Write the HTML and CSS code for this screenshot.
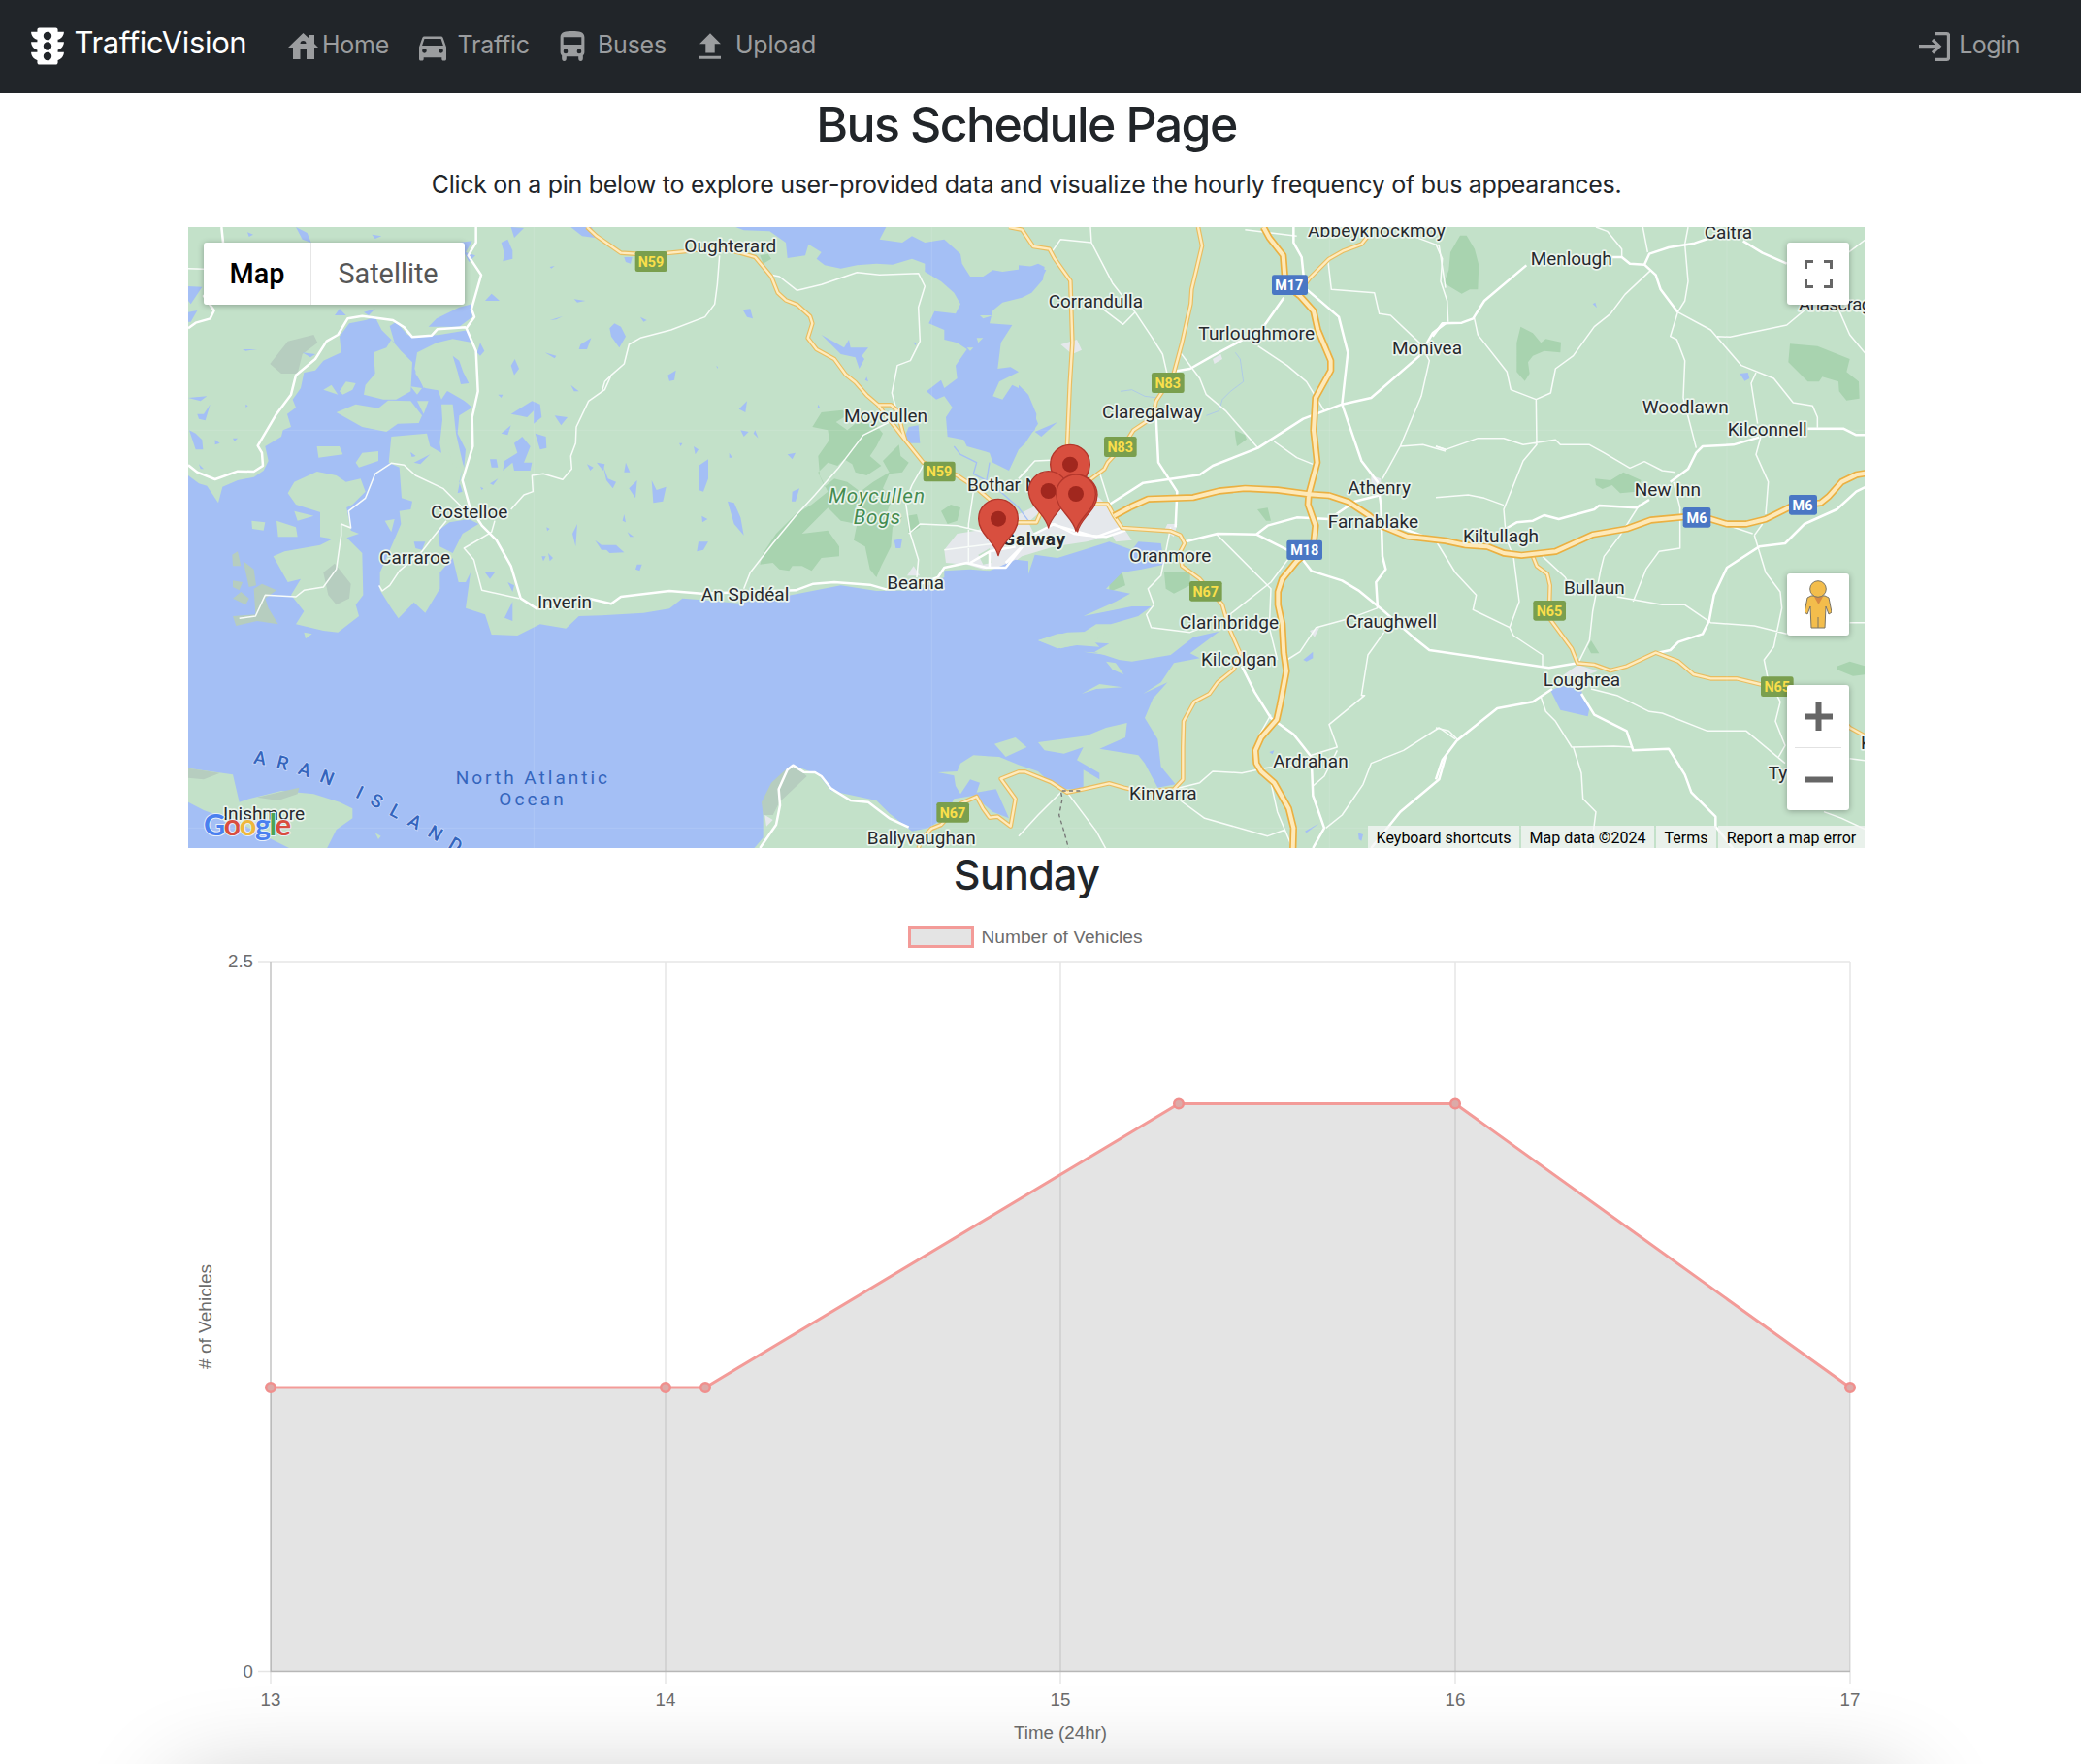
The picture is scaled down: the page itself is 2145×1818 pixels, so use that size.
FILE: index.html
```html
<!DOCTYPE html>
<html lang="en">
<head>
<meta charset="utf-8">
<title>TrafficVision</title>
<link rel="stylesheet" href="styles.css">
</head>
<body>
<nav class="navbar">
  <a class="brand"><svg class="i-brand" viewBox="3 2 18 20"><path fill-rule="evenodd" d="M20 10h-3V8.860c1.720-.45 3-2 3-3.860h-3V4c0-.55-.45-1-1-1H8c-.55 0-1 .45-1 1v1H4c0 1.860 1.280 3.410 3 3.860V10H4c0 1.860 1.280 3.410 3 3.860V15H4c0 1.860 1.280 3.410 3 3.860V20c0 .55.45 1 1 1h8c.55 0 1-.45 1-1v-1.140c1.720-.45 3-2 3-3.860h-3v-1.140c1.720-.45 3-2 3-3.860zM12 19a2 2 0 1 1 0-4 2 2 0 0 1 0 4zm0-5a2 2 0 1 1 0-4 2 2 0 0 1 0 4zm0-5a2 2 0 1 1 0-4 2 2 0 0 1 0 4z"/></svg><span>TrafficVision</span></a>
  <a class="link home"><svg viewBox="0 0 31 27"><path fill-rule="evenodd" d="M15.500 0 22 6V2h5v9l4 4h-4v12h-8V17h-6.500v10H5V15H0zM12.500 11h6q0-3-3-3t-3 3z"/></svg><span>Home</span></a>
  <a class="link traffic"><svg viewBox="3 5 18 16"><path d="M18.920 6.010C18.720 5.420 18.160 5 17.500 5h-11c-.66 0-1.210.42-1.420 1.010L3 12v8c0 .55.45 1 1 1h1c.55 0 1-.45 1-1v-1h12v1c0 .55.450 1 1 1h1c.55 0 1-.45 1-1v-8zM6.500 16a1.500 1.500 0 1 1 0-3 1.500 1.500 0 0 1 0 3zm11 0a1.500 1.500 0 1 1 0-3 1.500 1.500 0 0 1 0 3zM5 11l1.500-4.500h11L19 11z"/></svg><span>Traffic</span></a>
  <a class="link buses"><svg viewBox="4 2 16 20"><path d="M4 16c0 .88.39 1.670 1 2.220V20c0 1.100.5 2 1.500 2S8 21 8 20v-1h8v1c0 1 .5 2 1.500 2s1.500-1 1.500-2v-1.780c.61-.55 1-1.340 1-2.220V6c0-3.500-3.580-4-8-4s-8 .5-8 4zm3.500 1a1.500 1.500 0 1 1 0-3 1.500 1.500 0 0 1 0 3zm9 0a1.500 1.500 0 1 1 0-3 1.500 1.500 0 0 1 0 3zM18 11H6V6h12z"/></svg><span>Buses</span></a>
  <a class="link upload"><svg viewBox="5 3 14 17"><path d="M9 16h6v-6h4l-7-7-7 7h4zm-4 2h14v2H5z"/></svg><span>Upload</span></a>
  <a class="link login"><svg viewBox="0 0 32 30"><path d="M0 14.700h20M14 8l7 6.700-7 6.800M16 1.700h12.500q2 0 2 2v22.600q0 2-2 2H16" fill="none" stroke="currentColor" stroke-width="3.300"/></svg><span>Login</span></a>
</nav>
<main>
  <h1><span>Bus Schedule Page</span></h1>
  <p class="lead"><span>Click on a pin below to explore user-provided data and visualize the hourly frequency of bus appearances.</span></p>
  <section class="map">
  <svg class="map-art" viewBox="12 12 5184 1920">
    <defs>
      <path id="pin" d="M0 114C-8 72-61 48-61 0A61 61 0 1 1 61 0C61 48 8 72 0 114Z"/>
      <path id="aran" d="M212 1670C340 1688 480 1746 600 1811S790 1915 960 2018"/>
      <g id="national">
        <path transform="translate(1290)" d="M-45 12-15 40 60 92 105 95 200 93 250 88 360 75 430 92 475 105 525 165 545 215 570 238 605 252 645 288 652 310 638 355 665 390 720 420 755 468 785 492 820 532 855 562 940 672 995 740 1100 780 1160 820 1225 875M855 562 895 562 915 580 930 640 940 672M1280 925 1345 925 1365 880"/>
        <path transform="translate(2580)" d="M-30 12 10 20 45 72 95 80 110 108 160 178 166 370 158 500 150 690 160 760M555 12 567 70 535 205 532 250 505 370 478 470 425 550 415 600 355 640 330 680 275 740 265 760 225 790 180 830M235 868H275L295 905 320 942 470 952 500 965 513 990 500 1015 505 1060 560 1100 630 1180 650 1250 685 1330 665 1380 615 1420 590 1455 543 1480 510 1540 508 1620 508 1720 480 1750 380 1758 325 1745 280 1732 200 1750 150 1760 100 1728 20 1696 0 1696-55 1718-10 1780-25 1865-65 1835-90 1838-110 1810-130 1773-180 1795-240 1860-270 1872-300 1905-310 1932M885 190 900 170 960 110 1005 85 1060 65 1080 40 1085 12"/>
        <path transform="translate(3870 930)" d="M300 100 312 130 345 155 353 190 350 290 420 385 438 430 490 435 540 453 590 440 680 398 750 425 797 465 850 478 930 478 1000 495 1200 540 1280 630 1330 657"/>
      </g>
      <g id="motorway">
        <path transform="translate(2580)" d="M345 878 400 853 540 848 620 828 700 820 800 825 897 838 960 842 1020 862 1085 905 1120 935 1200 968 1320 982 1380 995 1450 1000 1500 1020 1555 1027 1660 1015 1775 963 1880 945 1955 918 2060 908 2140 915 2190 930 2250 930 2310 915 2390 875 2480 865 2505 845 2545 800 2590 778 2620 773M757 12 775 45 818 100 825 190 870 225 912 272 925 330 965 425 965 455 918 540 912 640 923 740 897 838 895 870 918 935 912 990 900 1010 860 1045 815 1100 802 1140 802 1180 815 1240 820 1330 828 1385 808 1490 798 1535 750 1590 732 1630 735 1670 750 1695 790 1730 835 1810 850 1870 848 1940"/>
        <path transform="translate(2580)" d="M295 905 345 878"/>
      </g>
    </defs>
    <rect class="land" x="0" y="0" width="5200" height="1940"/>
    <g class="forest">
      <path transform="translate(1290)" d="M652 630 680 585 745 578 765 590 725 615 760 640 790 615 850 625 870 650 850 690 830 720 865 750 820 780 785 770 775 745 750 730 730 750 700 740 670 770 690 815 720 790 760 800 800 830 840 800 890 770 870 735 920 685 925 720 950 740 930 770 890 775 870 820 900 850 880 900 930 910 900 940 895 1000 865 1060 850 1095 830 1070 815 1000 780 980 790 930 740 920 700 880 670 910 620 960 700 950 735 1000 735 1030 680 1035 650 1075 620 1060 590 1060 580 1075 550 1070 530 1050 490 1055 500 1020 540 960 600 900 650 870 700 830 675 780 670 720 705 670 700 640ZM1050 890 1080 870 1110 880 1100 920 1070 930ZM945 905 975 900 985 940 950 960ZM490 100 515 95 525 110 500 125Z"/>
      <path transform="translate(2580)" d="M668 640 700 655 705 668 675 690 670 660ZM738 885 770 880 780 920 765 920ZM450 1080 530 1080 530 1120 480 1145 455 1130ZM280 1095 320 1080 330 1120 280 1140Z"/>
      <path transform="translate(3870)" d="M45 90 75 38 95 38 120 80 133 130 130 205 105 205 80 218 25 185 40 145ZM262 320 300 340 325 370 340 358 387 368 385 400 335 395 300 410 285 430 290 465 275 488 250 460 250 370ZM1095 373 1180 380 1280 420 1270 460 1308 490 1310 542 1270 548 1247 520 1245 490 1195 475 1185 490 1150 490 1090 430ZM492 790 540 795 580 770 635 795 620 830 570 835 545 810 515 822 495 810ZM1240 1370 1280 1355 1330 1370V1395L1290 1400 1240 1380ZM480 1290 505 1330 480 1330 470 1310Z"/>
    </g>
    <g class="rock"><path d="M265 435 320 365 400 345 412 370 365 405 350 465 300 465Z"/></g>
    <g class="city">
      <path transform="translate(1290)" d="M1060 1010 1100 960 1160 950 1290 900 1370 860 1500 820 1540 850 1590 900 1600 960 1500 985 1400 1000 1300 1030 1260 1060 1180 1070 1130 1055 1065 1050ZM945 1090 965 1060 985 1090ZM505 1830 530 1845 510 1865Z"/>
      <path transform="translate(2580)" d="M130 375 180 360 195 392 165 405ZM600 420 625 405 630 420 605 435ZM1090 780 1120 790 1120 830 1090 820ZM270 930 310 920 350 980 300 985ZM460 930 490 930 480 970 450 950ZM900 1260 930 1250 915 1280ZM1680 1400 1730 1365 1790 1385 1750 1400Z"/>
    </g>
    <path class="land" transform="translate(1290)" d="M1165 1025 1200 1005 1205 1050 1180 1055ZM1320 925 1365 885 1380 935 1340 965Z"/>
    <g class="water">
      <!-- Atlantic, Galway Bay -->
      <path d="M12 780 45 805 70 812 105 865 118 815 165 795 215 785 245 765 260 735 250 690 300 660 305 640 330 630 318 590 345 570 335 545 360 510 370 462 405 455 430 425 485 400 480 350 510 310 560 300 590 290 610 330 650 370 635 318 655 305 690 345 710 352 790 345 880 330 885 368 830 358 780 370 720 400 712 450 740 510 775 490 795 545 815 515 845 530 890 570 850 595 845 650 870 700 865 755 845 700 830 640 800 590 790 680 795 710 760 690 750 650 640 660 632 740 665 755 672 850 705 860 700 885 665 890 670 930 640 1000 605 1080 605 1135 640 1190 662 1222 710 1172 745 1205 790 1130 790 1080 830 1035 848 1110 870 1110 885 1080 870 1190 930 1210 950 1272 1030 1275 1100 1240 1180 1253 1220 1215 1290 1213 1420 1205 1500 1192 1540 1160 1600 1165 1710 1175 1850 1155 2030 1120 2140 1137 2270 1135 2350 1095 2350 1075 2430 1070 2490 1075 2570 1040 2610 1045 2610 1085 2630 1025 2700 1035 2780 1010 2860 985 2930 1010 2950 985 3020 990 3030 1055 2960 1070 2900 1080 2850 1130 2925 1145 2880 1170 2780 1215 2930 1185 2990 1185 2950 1215 2865 1240 2820 1240 2780 1265 2700 1270 2640 1290 2710 1315 2790 1295 2860 1300 2815 1325 2890 1350 2930 1355 3050 1335 3120 1280 3200 1262 3110 1330 3140 1345 3060 1360 3020 1420 2965 1455 3040 1420 2995 1470 2970 1530 3010 1595 3020 1680 3065 1735 3010 1745 2970 1670 2950 1645 2830 1625 2910 1590 2915 1545 2850 1560 2790 1585 2640 1605 2660 1630 2720 1640 2780 1620 2760 1660 2830 1700 2830 1720 2780 1690 2780 1750 2700 1750 2640 1695 2580 1675 2520 1650 2440 1645 2400 1670 2390 1695 2330 1698 2380 1708 2385 1740 2400 1765 2430 1720 2460 1730 2450 1760 2510 1750 2550 1840 2500 1820 2440 1770 2380 1780 2350 1840 2300 1870 2250 1880 2180 1825 2140 1785 2000 1755 1960 1705 1880 1675 1850 1720 1820 1730 1790 1800 1790 1900 1760 1935H12Z"/>
      <!-- Lough Corrib -->
      <path transform="translate(1290)" d="M415 12 440 22 520 25 570 60 575 108 630 100 640 65 680 90 665 110 690 130 740 140 790 130 850 125 900 128 960 110 1000 125 1000 150 1050 180 1090 215 1110 250 1095 280 1030 272 1012 310 1060 330 1060 360 1100 370 1130 390 1095 440 1100 480 1060 510 1050 485 1005 520 1035 545 1060 535 1085 570 1065 600 1070 660 1120 670 1130 690 1200 710 1210 740 1260 765 1290 700 1310 680 1350 620 1310 520 1270 500 1240 545 1210 535 1230 490 1290 460 1265 445 1225 450 1235 370 1270 315 1200 310 1210 270 1240 245 1300 230 1330 215 1365 175 1370 135 1350 125 1310 140 1240 150 1210 145 1180 165 1140 165 1115 125 1110 95 1060 50 1000 60 960 40 930 60 860 50 880 12ZM1340 645 1410 615 1360 660ZM680 345 750 385 765 360 770 385 825 385 805 410 813 420 797 450 785 415 740 405ZM940 655 950 630 980 625 985 680 945 680ZM-95 12-30 12-20 45-60 40Z"/>
      <path transform="translate(1290)" d="M25 325 40 310 60 320 75 350 55 385 30 350ZM437 268 460 265 468 295 450 290ZM205 470 230 455 225 485 210 488ZM300 750 330 730 330 790 315 830 300 825ZM390 860 410 865 430 910 440 965 410 930ZM590 830 612 820 600 860 588 860ZM120 290 140 300 130 305ZM155 795 170 825 200 815 190 860 160 865ZM85 820 110 795 105 850ZM5 750 20 790 45 800 35 820 15 795ZM75 740 88 770 70 770ZM430 640 455 645 440 660ZM575 715 600 710 590 730ZM425 575 450 550 445 585ZM285 690 300 700 290 715ZM475 640 485 665 470 650ZM240 680 250 680 245 690ZM395 710 405 725 395 725ZM300 985 330 985 315 1010 295 1015ZM0 995 45 995 70 1018 25 1020ZM110 1055 125 1055 118 1075 105 1070ZM905 980 930 975 925 1005 910 1005ZM820 475 825 490 815 485ZM965 368 975 370 970 378ZM670 560 675 570 668 572ZM355 440 360 445 358 450ZM70 105 95 105 90 125 75 120ZM70 900 75 925 65 920ZM310 905 328 915 312 925ZM80 955 100 970 88 970Z"/>
      <path d="M195 28 213 35 200 42ZM345 12 380 30 392 60 365 50ZM580 35 610 40 590 48ZM850 60 890 55 870 90 900 100 880 120ZM1010 12 1050 15 1020 45ZM980 60 1000 50 1015 85 1015 110 985 118 990 95ZM1130 135 1145 132 1135 140ZM12 195 55 197 20 250 12 240ZM12 275 40 270 20 305 12 305ZM930 240 950 218 975 240ZM1205 235 1240 240 1215 245ZM1130 300 1170 288 1150 298ZM1225 375 1258 355 1245 390 1220 390ZM1010 440 1022 420 1035 450 1020 470ZM850 260 890 250 890 290 850 320 755 320 780 295ZM555 275 590 265 570 285ZM465 285 480 265 500 285ZM905 400 915 370 928 395 915 410ZM820 410 840 420 860 450 880 500 855 495 840 450ZM1195 500 1220 520 1205 520ZM1010 590 1075 550 1100 560 1105 600 1080 620 1080 580 1060 600 1035 595ZM1145 595 1185 600 1165 625ZM1085 650 1118 660 1120 695 1100 700ZM980 650 1010 625 1000 655ZM1020 680 1045 660 1070 690 1050 740 1075 740 1070 765 1020 765 1015 740 985 765 990 735 1030 710ZM945 730 965 730 970 755 950 755ZM1245 745 1265 755 1255 765ZM1275 740 1300 745 1295 765ZM945 805 970 790 955 810ZM915 815 925 820 920 825ZM970 530 985 530 980 540ZM12 540 70 535 50 550ZM40 590 60 590 80 560 65 610 45 605ZM15 640 35 650 55 670 58 700 35 700ZM95 670 110 680 95 685ZM150 665 165 665 155 675ZM190 560 197 565 190 570ZM180 390 225 390 190 395ZM365 400 405 405 390 415ZM45 745 60 760 50 760ZM700 710 715 720 705 722ZM710 740 760 715 730 745ZM1200 960 1215 930 1210 1000ZM1105 1030 1118 1030 1110 1045ZM930 1080 960 1080 945 1100ZM1125 1020 1140 1035 1130 1045ZM1270 980 1310 1010 1290 1010ZM710 985 745 985 735 1010 715 1005ZM1000 1110 1020 1120 1015 1140ZM990 1220 1015 1170 1015 1230ZM435 1110 460 1115 455 1145 430 1140ZM500 1070 513 1073 505 1080ZM355 1160 375 1155 375 1190ZM1120 940 1130 945 1122 952ZM1115 400 1150 410 1145 418ZM860 760 850 800 860 830 845 835ZM785 950 820 925 880 915 910 930 860 960 830 1020 790 1000ZM455 1010 475 1010 465 1025Z"/>
      <path transform="translate(2580)" d="M0 130 50 135 85 145 75 165 30 210 0 225ZM0 500 30 530 55 590 50 640 0 680ZM880 1350 910 1325 910 1345 890 1355ZM775 1635 790 1630 785 1642ZM885 1880 930 1855 890 1885ZM1050 1885 1065 1890 1060 1910 1052 1905Z"/>
      <path transform="translate(3870)" d="M485 250 493 245 498 262ZM940 465 965 462 970 480 955 488ZM355 1445 390 1430 450 1440 455 1470 475 1500 470 1525 385 1505Z"/>
    </g>
    <g class="stream"><path class="brook" transform="translate(2580)" d="M670 400 685 420 695 490 655 520 630 545 620 580 580 595M315 520 350 515 390 535 430 540"/><path transform="translate(1290)" d="M1090 690 1110 715 1160 740 1150 775 1200 800 1290 880 1320 920M1200 740 1190 800"/></g>
    <g class="land">
      <path d="M585 400 625 385 640 360 670 395 705 430 700 520 655 545 615 545 555 530 560 500 590 465ZM470 585 530 560 600 572 630 548 700 550 735 595 725 618 660 620 625 645 550 630ZM725 400 780 375 870 370 885 560 850 540 815 520 775 515 745 510 715 465ZM320 835 340 800 410 768 470 780 500 800 545 790 560 830 520 870 480 890 440 900 345 870ZM430 515 455 500 475 530ZM480 520 500 490 530 495 520 515 490 530ZM410 690 480 690 490 715 415 725ZM530 740 550 710 600 705 600 735 540 755ZM720 550 755 550 740 590ZM795 560 830 560 840 650 865 760 830 750 800 640ZM285 920 345 940 350 970 290 970ZM208 920 250 925 245 950 210 945ZM620 920 650 915 640 955ZM275 1030 310 1015 420 995 490 960 550 1020 553 1150 530 1180 540 1215 475 1265 430 1260 345 1240 370 1200 330 1150 360 1100 320 1110ZM340 890 400 905 350 920ZM420 870 500 870 515 950 540 960 480 980 420 970ZM700 505 735 510 720 530ZM12 1685 150 1705 170 1790 200 1780 300 1755 400 1765 480 1790 520 1810 520 1840 470 1875 440 1935H330L180 1860 60 1815 12 1790ZM370 1265 395 1270 375 1285ZM590 1885 608 1895 600 1905Z"/>
      <path transform="translate(1290)" d="M1215 1610 1280 1590 1315 1620 1250 1650ZM1170 285 1210 285 1180 295ZM1160 355 1180 355 1165 370ZM1130 385 1150 385 1140 395Z"/>
      <path transform="translate(2580)" d="M60 1290 150 1265 240 1262 280 1270 230 1290 250 1310 180 1305 120 1315ZM195 1455 250 1425 320 1435 240 1440ZM200 1325 280 1330 270 1335ZM270 1355 300 1360 325 1395 290 1380Z"/>
    </g>
    <path class="water" d="M830 410 850 425 862 460 880 495 855 498 845 460ZM755 585 780 560 790 590 770 610ZM700 708 715 720 703 722Z"/>
    <g class="rock">
      <path d="M148 1025 165 1015 175 1060 150 1060ZM182 1045 215 1070 222 1120 200 1125ZM150 1105 180 1110 170 1135 150 1125ZM150 1160 175 1140 200 1160 190 1180ZM215 1130 240 1115 285 1135 250 1160 260 1190 290 1240 225 1230 160 1245 150 1215 220 1210ZM430 1080 465 1052 515 1115 510 1160 470 1180 445 1150ZM12 1685 110 1700 60 1720 12 1715ZM225 1775 355 1745 350 1765 290 1785Z"/>
      <path transform="translate(1290)" d="M500 1830 495 1790 525 1730 580 1680 600 1680 635 1710 550 1790 530 1830Z"/>
    </g>
    <g class="local">
      <path d="M485 930 515 942 508 890 560 850 590 775 640 742 680 748 715 780 800 820 860 880M1320 470 1300 515 1250 550 1212 630 1210 680 1195 720 1198 760 1170 793 1110 775 1075 780 1078 830 1050 840 1010 885M485 930 485 965 470 1070 430 1125 370 1135 345 1155 250 1150 220 1215 170 1222M810 920 770 970 735 1015 665 1075 635 1120 612 1137 602 1120M960 920 950 955 865 1005 895 1040 920 1135 1035 1160M12 140 60 142"/>
      <path transform="translate(1290)" d="M30 470 10 490 0 525M365 100 358 190 350 250 320 290 215 330 120 355 85 375 70 435 30 470M525 160 550 165 605 208 680 190 790 152 860 160 980 155 1000 195 980 260 985 365 955 425 915 440 898 525 910 570M890 615 810 655 730 760 660 840 600 905 530 990 460 1080 440 1130M1000 740 960 810 940 860 955 960 980 1040 975 1095M1150 830 1135 930 1135 1055M950 960 985 930 1100 935 1180 955M1060 1010 1220 990M1320 760 1290 790"/>
      <path transform="translate(2580)" d="M105 85 130 50 225 60 290 185 360 275 410 350 445 405 460 470M222 12 225 60M260 265 323 313 360 275M500 400 560 480 580 530 640 580 740 695M740 380 830 440 890 490 945 580M700 20 860 40M957 120 967 205 1100 215 1115 280 1150 285 1240 370 1270 425 1245 535 1180 690 1125 790M1180 690 1250 685 1320 705M790 675 860 725 910 745M1220 40 1300 70 1320 200M1290 690 1320 700M0 790 50 735 100 733M250 770 280 865M470 940 440 1090 400 1130 418 1180 395 1210 410 1250 530 1265 570 1250M610 960 780 1130 775 1250 800 1350M640 1220 780 1110 840 1030M830 1350 870 1325 920 1250 1030 1220 1110 1190M1130 1265 1080 1335 1060 1460 1070 1460 960 1550 985 1620 905 1645M985 1630 945 1710 910 1740M480 1750 560 1730 600 1695 690 1700 760 1685 850 1675M500 1785 575 1840 770 1895 825 1875M780 1730 800 1820 850 1940M950 1870 1000 1830 1065 1735 1090 1670 1190 1630 1300 1560 1350 1595M0 1895 60 1830 130 1760M150 1760 240 1880 270 1935M780 1520 740 1590"/>
      <path transform="translate(3870)" d="M0 65 20 110 15 180 35 240 38 305M118 290 130 345 220 460 232 515 310 545 312 685 270 735 210 885 215 945M310 545 355 525 370 450 425 410 490 320 540 280 585 220 665 145M495 12 530 25 575 80V105M640 12 655 90M780 12 770 65 780 180 770 240 748 275 725 350 745 360 770 425 765 540 805 695M748 275 850 330 945 440 1045 480 1105 555 1165 565 1180 600V632M870 350 910 352 1085 315 1145 265M990 462 975 495 995 620M1245 265 1280 345 1330 405M1270 95 1330 50M0 690 30 700 130 665 210 665 270 685 370 670 385 685 475 685 520 710 600 757 645 737 700 765 740 770M1005 660 990 715 1028 800 1020 900M0 848 100 840 150 850 210 872M630 870 570 965 520 1030 510 1070 485 1200 475 1290 440 1360M735 800 755 880 755 1005 690 1015 650 1070 610 1170M560 1155 700 1180 770 1180 850 1235 985 1245 1085 1270M985 965 1020 1080 1065 1140 1070 1190 1045 1310 1015 1350 1025 1400 1065 1480 1050 1540 1080 1615 1060 1650M985 965 1010 930M860 920 980 960M5 990 60 1080 125 1150 115 1195 228 1250 240 1275 330 1335V1370M215 970 240 1030 258 1170 228 1250M330 1030 400 1095 430 1150M325 1465 340 1510 370 1540 420 1620 550 1617 610 1620M425 1620 450 1700 455 1780 495 1820 480 1935M480 1440 560 1460 660 1510 700 1515 840 1570 960 1570 1080 1670M1280 1235H1330M1280 1655 1330 1662M1200 1820 1255 1840 1330 1875M0 1560 40 1570 70 1600"/>
    </g>
    <g class="regional">
      <path d="M115 12 120 60 95 200 60 225 92 270 80 295 35 308 12 325M12 748 40 770 95 792 165 767 215 768 243 750 240 710 227 688 285 590 330 530 345 470 405 420 440 365 475 345 505 295 550 287 645 300 680 322 705 352 765 347 782 328 870 322M902 12V60L878 100 918 160 888 265 897 290 872 325 902 395 908 520 890 600 892 690 860 795 882 875 920 935 965 980 1010 1060 1040 1160 1090 1192 1150 1180 1250 1160 1320 1177 1350 1155 1500 1137 1600 1145 1890 1135 1945 1115 2010 1110 2120 1118 2170 1132 2250 1125 2330 1095 2350 1065 2420 1050 2480 1065 2540 1065 2600 990"/>
      <path transform="translate(1290)" d="M490 1932 540 1860 552 1800 548 1750 575 1690 592 1676 625 1697 660 1698 680 1710 710 1748 770 1785 825 1790 890 1840 950 1868"/>
      <path transform="translate(1290)" d="M1140 1050 1200 1015 1280 1000M1200 1015V1065M1250 1050 1340 960 1400 930 1460 960 1500 965 1560 970 1620 950"/>
      <path transform="translate(2580)" d="M820 230 750 330 600 410 530 450 480 458M850 12V60L875 105 885 200 990 290 1018 400 1000 560 1060 735 1110 800 1120 870M1240 410 1090 540 1000 560 880 605 740 695 600 750 560 778 385 803 280 870M425 600 432 740 490 830 485 940M100 930 240 970 320 940M515 985 615 960 735 962 770 935 860 910 960 915 1040 860 1120 840M735 962 870 1030 905 1075 1000 1105 1050 1135 1130 1200 1220 1280 1270 1320 1640 1375 1730 1360M1120 870 1125 1030 1135 1070 1105 1110 1110 1190M1150 930 1300 985M690 1370 730 1450 780 1530 850 1580 905 1650 910 1770 945 1870 910 1932M1090 1932 1180 1820 1300 1720 1320 1650M1240 410 1280 340 1320 310"/>
      <path transform="translate(3870)" d="M-10 350 20 310 80 308 115 295 150 240 280 130M545 105 575 105 600 125 645 128 660 95 720 75 800 62 850 45M950 55 1010 92 1085 125M645 128 680 160 695 205 748 275M1150 635 1260 635 1300 655H1330M1000 662 920 685 825 690 805 710 780 760 725 800M660 855 620 880 505 873 490 885 380 915 335 903 300 920 250 925 215 945M1330 815 1300 830 1240 885 1140 930 1080 990 1000 1000 900 1065 860 1150 845 1230 825 1270 750 1295 725 1320 680 1330M360 1440 300 1480 190 1500 65 1600 20 1660 0 1720M450 1455 490 1520 590 1570 610 1630 720 1625 770 1705 790 1760 865 1835V1865L920 1935"/>
    </g>
    <use href="#national" class="nat-case"/><use href="#national" class="nat-fill"/>
    <use href="#motorway" class="mot-case"/><use href="#motorway" class="mot-fill"/>
    <path class="rail" d="M2770 1755H2710L2715 1780 2705 1830 2720 1880 2735 1935"/>
    <path class="tile" d="M1081 12V1932M2311 12V1932M3541 12V1932M4770 12V1932M12 640H5196M12 1870H5196"/>
    <g class="place">
      <text x="762" y="913" textLength="238">Costelloe</text><text x="603" y="1053" textLength="219">Carraroe</text><text x="1092" y="1192" textLength="168">Inverin</text><text x="120" y="1845" textLength="252">Inishmore</text>
      <text x="1546" y="90" textLength="285">Oughterard</text><text x="2040" y="614" textLength="258">Moycullen</text><text x="2421" y="829" textLength="165">Bothar</text><text x="2600" y="829">N</text><text x="1598" y="1168" textLength="272">An Spidéal</text><text x="2173" y="1130" textLength="176">Bearna</text><text x="2111" y="1920" textLength="336">Ballyvaughan</text>
      <text x="2672" y="260" textLength="292">Corrandulla</text><text x="3136" y="361" textLength="359">Turloughmore</text><text x="3474" y="42" textLength="425">Abbeyknockmoy</text><text x="2838" y="604" textLength="310">Claregalway</text><text x="3735" y="406" textLength="216">Monivea</text><text x="3598" y="837" textLength="194">Athenry</text><text x="3536" y="942" textLength="280">Farnablake</text>
      <text x="2922" y="1048" textLength="253">Oranmore</text><text x="3078" y="1255" textLength="306">Clarinbridge</text><text x="3144" y="1367" textLength="233">Kilcolgan</text><text x="3590" y="1250" textLength="283">Craughwell</text><text x="3367" y="1683" textLength="232">Ardrahan</text><text x="2922" y="1783" textLength="209">Kinvarra</text>
      <text x="4163" y="130" textLength="252">Menlough</text><text x="4700" y="48" textLength="148">Caltra</text><text x="4992" y="270" textLength="256">Ahascragh</text><text x="4508" y="588" textLength="267">Woodlawn</text><text x="4772" y="658" textLength="246">Kilconnell</text><text x="4484" y="844" textLength="205">New Inn</text><text x="3954" y="988" textLength="234">Kiltullagh</text><text x="4266" y="1147" textLength="188">Bullaun</text><text x="4202" y="1432" textLength="238">Loughrea</text><text x="4898" y="1719">Tynagh</text><text x="5184" y="1625">K</text>
      <text class="town" x="2530" y="995" textLength="194">Galway</text>
      <g class="park"><text x="1993" y="863" textLength="296">Moycullen</text><text x="2069" y="931" textLength="145">Bogs</text></g>
    </g>
    <g class="sea"><text x="839" y="1735" textLength="469" lengthAdjust="spacing">North Atlantic</text><text x="973" y="1799" textLength="199" lengthAdjust="spacing">Ocean</text><text class="islands"><textPath href="#aran" textLength="764" lengthAdjust="spacing">ARAN ISLANDS</textPath></text></g>
    <g class="shield green">
      <rect x="1394" y="87" width="99" height="63"/><rect x="2285" y="737" width="99" height="62"/><rect x="2991" y="462" width="101" height="63"/><rect x="2844" y="660" width="101" height="63"/><rect x="3108" y="1107" width="101" height="62"/><rect x="2326" y="1791" width="101" height="62"/><rect x="4171" y="1167" width="101" height="62"/><rect x="4875" y="1402" width="101" height="62"/>
      <text x="1443" y="135">N59</text><text x="2334" y="784">N59</text><text x="3041" y="510">N83</text><text x="2894" y="707">N83</text><text x="3158" y="1154">N67</text><text x="2376" y="1839">N67</text><text x="4221" y="1214">N65</text><text x="4925" y="1450">N65</text>
    </g>
    <g class="shield blue">
      <rect x="3363" y="160" width="111" height="62"/><rect x="3409" y="980" width="110" height="61"/><rect x="4634" y="879" width="86" height="62"/><rect x="4962" y="840" width="87" height="62"/>
      <text x="3416" y="207">M17</text><text x="3464" y="1027">M18</text><text x="4677" y="926">M6</text><text x="5004" y="887">M6</text>
    </g>
    <g class="pins">
      <use href="#pin" x="2739" y="746"/><circle cx="2739" cy="746" r="24"/>
      <use href="#pin" x="2672" y="828"/><circle cx="2672" cy="828" r="24"/>
      <use href="#pin" x="2762" y="840"/><use href="#pin" x="2757" y="838"/><circle cx="2757" cy="837" r="24"/>
      <use href="#pin" x="2517" y="914"/><circle cx="2517" cy="914" r="24"/>
    </g>
    <text class="google" x="60" y="1893" textLength="270"><tspan class="g-blue">G</tspan><tspan class="g-red">o</tspan><tspan class="g-yellow">o</tspan><tspan class="g-blue">g</tspan><tspan class="g-green">l</tspan><tspan class="g-red">e</tspan></text>
  </svg>
  <div class="types"><button class="active">Map</button><button>Satellite</button></div>
  <button class="ctl full"><svg viewBox="0 0 29 29"><path d="M1.500 9V1.500H9M20 1.500h7.500V9M27.500 20v7.500H20M9 27.500H1.500V20"/></svg></button>
  <button class="ctl peg"><svg viewBox="0 0 28 50"><path d="M7 16h14l4 2 3 15-3 2-3-8-1 22H7L6 27l-3 8-3-2 3-15z"/><path class="chest" d="M10 17h9l-4.500 8z"/><path class="legs" d="M14 38v11"/><circle cx="14" cy="9" r="8.300"/></svg></button>
  <div class="ctl zoom"><button><svg viewBox="0 0 29 29"><path d="M0 14.500h29M14.500 0v29"/></svg></button><button><svg viewBox="0 0 29 29"><path d="M0 14.500h29"/></svg></button></div>
  <div class="legal"><span>Keyboard shortcuts</span><span>Map data ©2024</span><span>Terms</span><span>Report a map error</span></div>
  </section>
  <h2><span>Sunday</span></h2>
  <svg class="chart" viewBox="194 936 1728 882">
    <rect class="key" x="937.500" y="955.500" width="65" height="20"/>
    <text x="1011.500" y="972" textLength="166" lengthAdjust="spacingAndGlyphs">Number of Vehicles</text>
    <path class="area" d="M279 1430H727L1215 1137.500H1500L1907 1430V1722.500H279Z"/>
    <path class="grid" d="M266 991H1907M266 1722.500H1907M279 991V1736M686 991V1736M1093 991V1736M1500 991V1736M1907 991V1736"/>
    <path class="axis" d="M279 991V1722.500H1907"/>
    <path class="line" d="M279 1430H727L1215 1137.500H1500L1907 1430"/>
    <g class="dots"><circle cx="279" cy="1430" r="4.800"/><circle cx="686" cy="1430" r="4.800"/><circle cx="727" cy="1430" r="4.800"/><circle cx="1215" cy="1137.500" r="4.800"/><circle cx="1500" cy="1137.500" r="4.800"/><circle cx="1907" cy="1430" r="4.800"/></g>
    <g class="end"><text x="261" y="997">2.5</text><text x="261" y="1729">0</text></g>
    <g class="mid"><text x="279" y="1758">13</text><text x="686" y="1758">14</text><text x="1093" y="1758">15</text><text x="1500" y="1758">16</text><text x="1907" y="1758">17</text>
    <text x="1093" y="1792" textLength="96" lengthAdjust="spacingAndGlyphs">Time (24hr)</text><text transform="translate(217.500 1357) rotate(-90)" textLength="108" lengthAdjust="spacingAndGlyphs"># of Vehicles</text></g>
  </svg>
</main>
<div class="dock"><div class="dock-shadow"></div></div>
</body>
</html>
```
FILE: styles.css
```css
* { box-sizing: border-box; }
body { margin: 0; height: 1818px; position: relative; overflow: hidden; background: #fff; color: #212529; font-family: Inter, "Liberation Sans", sans-serif; }
button { border: 0; padding: 0; background: #fff; font: inherit; }
svg { display: block; }

.navbar { height: 96px; background: #212529; display: flex; align-items: flex-start; padding: 0 63px 0 30px; }
.navbar a { display: flex; align-items: center; height: 94px; white-space: nowrap; }
.brand { color: #fff; font-size: 31px; letter-spacing: -.35px; width: 267px; gap: 8.500px; }
.brand span { position: relative; top: -4px; }
.i-brand { width: 38px; height: 43px; }
.navbar svg { fill: currentColor; flex: none; }
.link { color: #9b9d9f; font-size: 25px; letter-spacing: -.25px; }
.link span { margin-top: -2px; }
.home { width: 135px; gap: 4px; }
.home svg { width: 31px; height: 27px; }
.traffic { width: 145px; gap: 11.500px; }
.traffic svg { width: 28px; height: 26px; margin-top: 6px; }
.buses { width: 144px; gap: 13px; }
.buses svg { width: 26px; height: 31px; }
.upload { gap: 15px; }
.upload svg { width: 22px; height: 27px; }
.login { margin-left: auto; gap: 9px; letter-spacing: -.5px; }
.login svg { width: 32px; height: 30px; margin-top: 2px; }

main { width: 1728px; margin-left: 194px; }
h1, h2, .lead { margin: 0; display: flex; justify-content: center; white-space: nowrap; }
h1 { height: 70px; line-height: 64px; font-weight: 500; font-size: 50px; letter-spacing: -1.600px; }
.lead { height: 68px; line-height: 48px; font-size: 25px; letter-spacing: -.295px; }
h2 { height: 62px; line-height: 54px; font-weight: 500; font-size: 43px; letter-spacing: -.7px; }

.map { height: 640px; position: relative; overflow: hidden; font-family: Roboto, sans-serif; }
.map-art { width: 1728px; height: 640px; }
.land { fill: #c3e1c9; }
.water { fill: #a4bff5; }
.forest { fill: #a8d3af; }
.rock { fill: #b6cdbf; }
.city { fill: #e5e8ec; }
.map-art path { stroke-linejoin: round; }
.stream { fill: none; stroke: #a4bff5; stroke-width: 4; }
.brook { stroke-width: 2; }
.local { fill: none; stroke: #f8fcf9; stroke-width: 4.500; }
.regional { fill: none; stroke: #fff; stroke-width: 7.500; }
.nat-case, .nat-fill, .mot-case, .mot-fill { fill: none; }
.nat-case { stroke: #e9bd60; stroke-width: 14; }
.nat-fill { stroke: #ffebbd; stroke-width: 7; }
.mot-case { stroke: #ebb041; stroke-width: 22; }
.mot-fill { stroke: #fee9b9; stroke-width: 12; }
.rail { fill: none; stroke: #777; stroke-width: 4; stroke-dasharray: 12 10; }
.tile { stroke: #fff; stroke-opacity: .18; stroke-width: 2; }
.place { font-size: 57px; fill: #27292e; stroke: #eaf4ec; stroke-width: 10; paint-order: stroke; stroke-linejoin: round; }
.town { font-weight: 700; }
.park { font-style: italic; fill: #448b50; font-size: 62px; }
.sea { font-size: 57px; fill: #3465bd; }
.islands { font-weight: 500; stroke: #c8d8fa; stroke-width: 5; paint-order: stroke; }
.shield { font-size: 43px; font-weight: 700; text-anchor: middle; }
.shield rect { rx: 7px; }
.green rect { fill: #7a9f4e; }
.green text { fill: #fadf4b; }
.blue rect { fill: #4a77c4; }
.blue text { fill: #fff; }
.pins use { fill: #d84f3f; stroke: #b3362b; stroke-width: 4; }
.pins circle { fill: #a1271e; }
.google { font-family: Lato, sans-serif; font-weight: 700; font-size: 92px; stroke: #e8f0fa; stroke-width: 6; paint-order: stroke; }
.g-blue { fill: #4a80ef; }
.g-red { fill: #d94d3e; }
.g-yellow { fill: #efb83c; }
.g-green { fill: #4ca456; }

.types { position: absolute; left: 16px; top: 16px; height: 64px; width: 269px; display: flex; border-radius: 3px; box-shadow: 0 1px 6px rgba(0,0,0,.3); overflow: hidden; font-size: 28.800px; color: #565656; }
.types button { flex: 1; color: #565656; }
.types .active { flex: 0 0 111px; color: #000; font-weight: 500; border-right: 1px solid #e6e6e6; }
.ctl { position: absolute; left: 1648px; width: 64px; height: 64px; background: #fff; border-radius: 3px; box-shadow: 0 1px 6px rgba(0,0,0,.3); display: flex; align-items: center; justify-content: center; }
.full { top: 16px; }
.full svg, .zoom svg { width: 29px; height: 29px; fill: none; stroke: #666; stroke-width: 3; }
.peg { top: 357px; }
.peg svg { width: 28px; height: 50px; fill: #f3bd4c; stroke: #7a7465; stroke-width: 1; }
.peg .chest { fill: #d88a42; stroke: none; }
.zoom { top: 472px; height: 129px; flex-direction: column; }
.zoom button { width: 48px; flex: 1; display: flex; align-items: center; justify-content: center; }
.zoom button + button { border-top: 1px solid #e2e2e2; }
.zoom svg { stroke-width: 6; }
.legal { position: absolute; right: 0; bottom: 0; height: 23px; width: 512px; display: grid; grid-template-columns: 156px 137px 62px 151px; column-gap: 2px; line-height: 25px; font-size: 16px; color: #000; white-space: nowrap; }
.legal span { background: rgba(245,245,245,.75); text-align: center; }

.chart { width: 1728px; height: 882px; font-family: "Liberation Sans", sans-serif; font-size: 18.700px; fill: #6c6c6c; }
.key { fill: #e4e4e4; stroke: #f39b98; stroke-width: 3; }
.area { fill: #e4e4e4; }
.grid { fill: none; stroke: #000; stroke-opacity: .1; stroke-width: 1.500; }
.axis { fill: none; stroke: #000; stroke-opacity: .15; stroke-width: 1.500; }
.line { fill: none; stroke: #f39b98; stroke-width: 3; }
.dots { fill: #dcaaa8; stroke: #f08f8d; stroke-width: 2.500; }
.end { text-anchor: end; }
.mid { text-anchor: middle; }
.dock { position: absolute; inset: auto 0 0 0; height: 130px; overflow: hidden; pointer-events: none; }
.dock-shadow { margin: 150px 180px 0; height: 100px; border-radius: 30px; box-shadow: 0 0 100px rgba(0,0,0,.24); }
```
